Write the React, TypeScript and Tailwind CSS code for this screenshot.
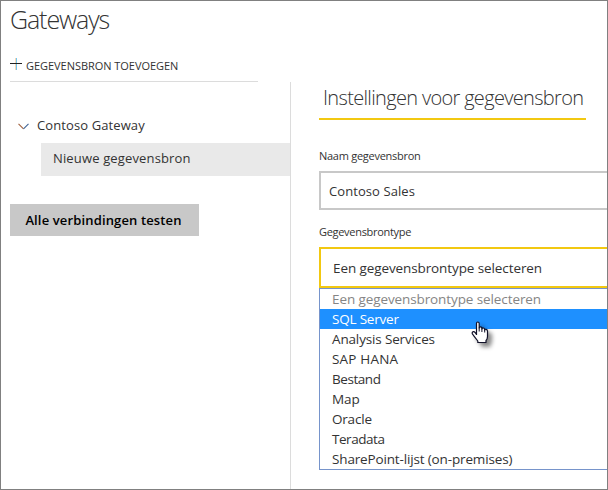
const options = [
  { label: 'Een gegevensbrontype selecteren', style: 'text-[#858585] tracking-[-0.1px]' },
  { label: 'SQL Server', style: 'bg-[#1e90ff] text-white tracking-[-0.2px]' },
  { label: 'Analysis Services', style: 'tracking-[-0.15px]' },
  { label: 'SAP HANA', style: 'tracking-[0.2px]' },
  { label: 'Bestand', style: 'tracking-[-0.45px]' },
  { label: 'Map', style: 'tracking-[-0.1px]' },
  { label: 'Oracle', style: 'tracking-[-0.2px]' },
  { label: 'Teradata', style: 'tracking-[-0.45px]' },
  { label: 'SharePoint-lijst (on-premises)', style: 'tracking-[-0.15px]' },
];

function HandCursor() {
  return (
    <svg
      className="absolute left-[152px] top-[33px] drop-shadow-[4px_4px_2px_rgba(0,0,0,0.45)]"
      width="18"
      height="23"
      viewBox="0 0 18 23"
    >
      <path
        d="M5.5 14V2.5Q5.5 1 6.8 1T8.2 2.5V7Q8.4 5.8 9.6 5.9T10.9 7.3V8Q11.2 6.8 12.3 7T13.7 8.4V9.2Q14 8 15.2 8.3T16.5 10V15.5Q16.5 18 15 19.5V21.5H6.8V20L3.2 15.3L1.2 12.6Q0.8 11 2.2 10.6Q3.4 10.5 4.2 11.6L5.5 13.5"
        fill="white"
        stroke="#101028"
        strokeWidth="1.2"
        strokeLinejoin="round"
      />
      <path d="M8.2 6.5V10.5M10.9 7.5V11M13.7 8.8V11.5" stroke="#101028" strokeWidth="1" fill="none" />
    </svg>
  );
}

function Sidebar() {
  return (
    <aside className="w-[289px] shrink-0 pt-[33px]">
      <div className="flex h-5 items-center pl-[17px]">
        <svg width="11" height="7" viewBox="0 0 11 7" className="mt-[3px]" fill="none" strokeWidth="1.1">
          <path d="M0.5 0.8L5.5 5.8" stroke="#a0603c" />
          <path d="M5.5 5.8L10.5 0.8" stroke="#3f6496" />
        </svg>
        <span className="ml-2 text-[13px] leading-5 tracking-[0.1px]">Contoso Gateway</span>
      </div>
      <div className="ml-10 mt-2 h-[33px] bg-[#e9e9e9] pl-3 text-[13px] leading-[31px] tracking-[0.15px]">
        Nieuwe gegevensbron
      </div>
      <button className="ml-[9px] mt-7 block h-8 w-[189px] whitespace-nowrap bg-[#c8c8c8] pr-[2px] text-[13px] font-semibold leading-8 tracking-[0.14px] text-black">
        Alle verbindingen testen
      </button>
    </aside>
  );
}

function SourceSettings() {
  return (
    <main className="min-w-0 grow border-l border-[#dcdcdc] pl-7">
      <h2 className="h-[38px] w-[267px] whitespace-nowrap border-b-2 border-[#f2c811] pl-1 text-[20px] font-light leading-8 tracking-[-0.67px]">
        Instellingen voor gegevensbron
      </h2>
      <label className="mt-[26px] block h-[25px] text-[11px] leading-5 tracking-[-0.27px]">Naam gegevensbron</label>
      <div className="h-[39px] border-2 border-r-0 border-[#c8c8c8] pl-2 text-[13px] leading-9 tracking-[0.08px]">
        Contoso Sales
      </div>
      <label className="mt-3 block h-[25px] text-[11px] leading-5 tracking-[-0.3px]">Gegevensbrontype</label>
      <div className="h-[41px] border-2 border-r-0 border-[#f2c811] pl-3 text-[13.5px] leading-[38px] tracking-[-0.1px]">
        Een gegevensbrontype selecteren
      </div>
      <div className="relative">
        <ul className="border border-r-0 border-[#7694cb] text-[13.5px] leading-5">
          {options.map((option) => (
            <li key={option.label} className={`h-5 pl-3 ${option.style}`}>
              {option.label}
            </li>
          ))}
        </ul>
        <HandCursor />
      </div>
    </main>
  );
}

export default function App() {
  return (
    <div className="flex h-[490px] w-[608px] flex-col overflow-hidden border border-[#808080] bg-white font-['Open_Sans','Noto_Sans',sans-serif] text-[#333333]">
      <header className="h-[81px] shrink-0 pl-[9px]">
        <h1 className="h-[55px] text-[25px] font-light leading-9 tracking-[-1.1px]">Gateways</h1>
        <div className="flex h-[26px] w-[248px] border-b border-[#dcdcdc]">
          <svg width="12" height="12" viewBox="0 0 12 12" className="mt-[2px]" shapeRendering="crispEdges">
            <path d="M6.5 0V12" stroke="#71c5ef" />
            <path d="M5.5 0V12" stroke="#f7d9b5" />
            <path d="M0 5.5H12" stroke="#222222" />
          </svg>
          <span className="ml-1 text-[11px] leading-5 tracking-[-0.04px]">GEGEVENSBRON TOEVOEGEN</span>
        </div>
      </header>
      <div className="flex grow">
        <Sidebar />
        <SourceSettings />
      </div>
    </div>
  );
}
